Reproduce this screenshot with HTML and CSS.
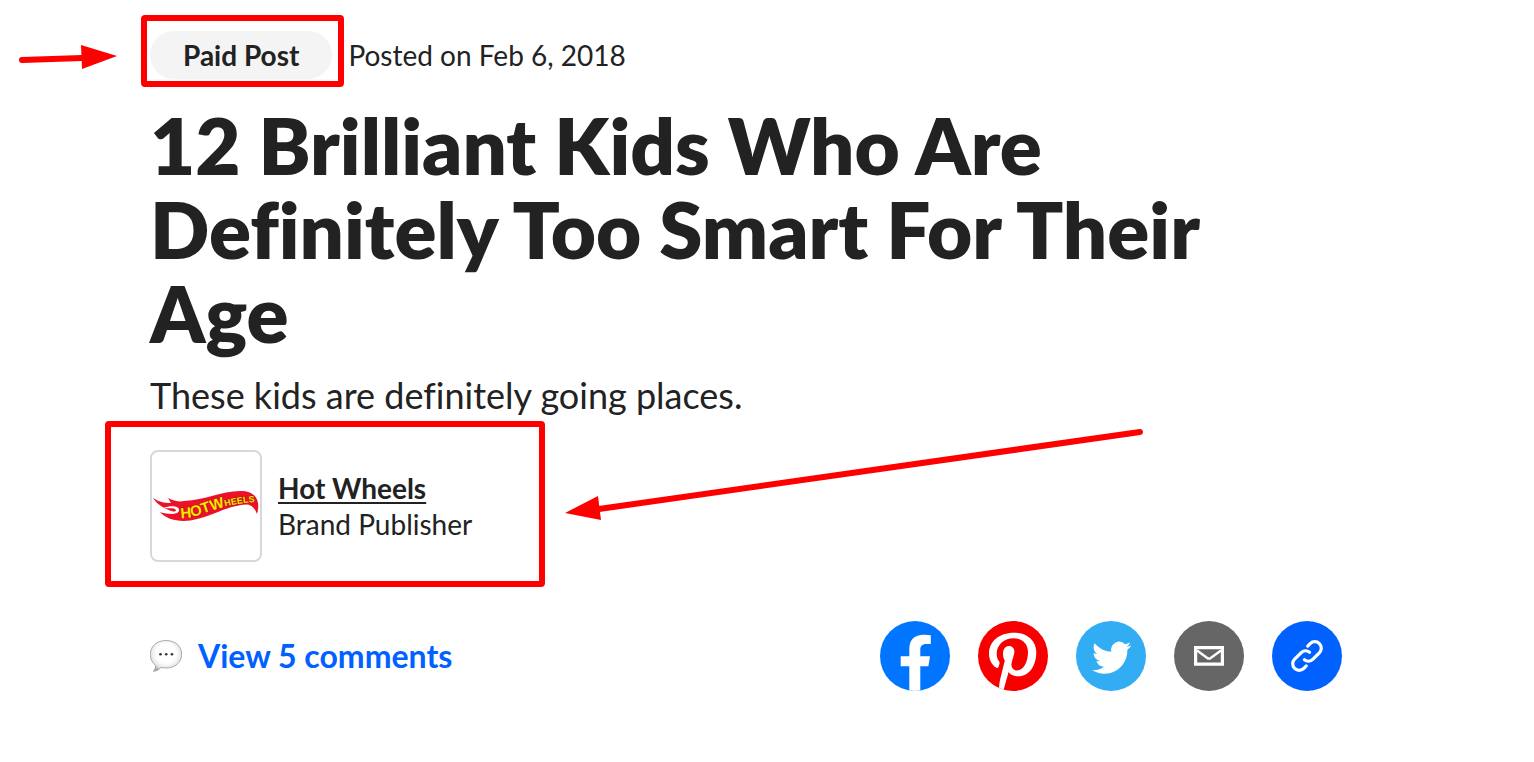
FILE: index.html
```html
<!DOCTYPE html>
<html lang="en">
<head>
<meta charset="utf-8">
<meta name="viewport" content="width=device-width, initial-scale=1">
<title>12 Brilliant Kids Who Are Definitely Too Smart For Their Age</title>
<link rel="stylesheet" href="styles.css">
</head>
<body>
<main class="post">
  <header>
    <div class="meta">
      <div class="marked">
        <span class="badge">Paid Post</span>
        <span class="frame frame-badge"></span>
        <svg class="arrow arrow-badge" viewBox="0 0 100 26" aria-hidden="true">
          <path d="M4 16 64 14" stroke="#f00" stroke-width="6" stroke-linecap="round"/>
          <path d="M63 1 99 12 64 25Z" fill="#f00"/>
        </svg>
      </div>
      <time class="date" datetime="2018-02-06">Posted on Feb 6, 2018</time>
    </div>
    <h1 class="title">12 Brilliant Kids Who Are Definitely Too Smart For Their Age</h1>
    <p class="subtitle">These kids are definitely going places.</p>
  </header>

  <div class="byline marked">
    <svg class="avatar" viewBox="0 0 108 108" role="img" aria-label="Hot Wheels logo">
      <defs>
        <path id="wave" d="M29 66C48 67 66 51 106 50"/>
      </defs>
      <path d="M1 46C7 50 12 51 19 51L16 46C22 49 27 50 32 49C55 48 70 38 91 39C103 40 109 48 105 62C102 54 98 51 89 53C69 56 54 68 32 69C21 69 12 65 8 60C14 62 19 62 24 60C17 59 6 54 1 46Z" fill="#ed1128"/>
      <path d="M11 56C20 53 28 54 27 59C25 63 17 62 14 61C20 61 24 60 24 58C21 55 17 57 11 56Z" fill="#fff"/>
      <text class="logo-text"><textPath href="#wave"><tspan font-size="15">HOTW</tspan><tspan font-size="9">HEELS</tspan></textPath></text>
    </svg>
    <div class="author">
      <a class="author-name" href="#author">Hot Wheels</a>
      <span>Brand Publisher</span>
    </div>
    <span class="frame frame-byline"></span>
    <svg class="arrow arrow-byline" viewBox="0 0 580 94" aria-hidden="true">
      <path d="M575 5 34 82" stroke="#f00" stroke-width="6" stroke-linecap="round"/>
      <path d="M0 86 33 69 36 93Z" fill="#f00"/>
    </svg>
  </div>

  <footer class="actions">
    <a class="comments" href="#comments">
      <svg class="bubble" viewBox="0 0 32 32" aria-hidden="true">
        <defs>
          <radialGradient id="shade" cx=".5" cy=".42" r=".58">
            <stop offset=".55" stop-color="#fff"/>
            <stop offset=".85" stop-color="#e4e4e4"/>
            <stop offset="1" stop-color="#aaa"/>
          </radialGradient>
        </defs>
        <path d="M16 .5C25 .5 31.7 6 31.7 14.2S25 28 16 28C14 28 12.500 27.800 11 27.400C9 29.500 6.500 31 3.500 31.300C5 29.500 5.800 27.500 5.600 25.300C2.200 22.800 .3 19 .3 14.500C.3 6 7 .5 16 .5Z" fill="url(#shade)" stroke="#999" stroke-width=".8"/>
        <g fill="#333"><circle cx="10.500" cy="14.300" r="1.300"/><circle cx="16.200" cy="14.300" r="1.300"/><circle cx="21.900" cy="14.300" r="1.300"/></g>
      </svg>
      <span>View 5 comments</span>
    </a>
    <nav class="share" aria-label="Share">
      <a class="share-link facebook" href="#facebook" aria-label="Facebook">
        <svg viewBox="0 0 70 70" fill="#fff"><path d="M29.300 70V45.300H20.700V35.300H29.300V28C29.300 18.500 35 13.700 43.300 13.700C47 13.700 50.800 14.300 50.800 14.300V23H46.200C42 23 40.300 25.400 40.300 28.500V35.300H50L48.400 45.300H40.300V70Z"/></svg>
      </a>
      <a class="share-link pinterest" href="#pinterest" aria-label="Pinterest">
        <svg viewBox="0 0 70 70" fill="#fff"><path d="M20.500 46C19.800 47.300 18.800 47.200 17.500 46.200C13.200 43 11 38 11 32.500C11 20.500 21 11.700 36 11.700C49.500 11.700 58.300 20 58.300 31C58.300 45 51 55.300 40.500 55.300C36 55.300 32 53.500 30.600 51L26 67.500L25 70L21.200 68C20.900 65 21.400 62 22 59L26.800 39.500C25.500 37.500 25 35 25 32.500C25 28 27.500 25 31 25C34.500 25 36.400 27.500 36.400 30.500C36.400 34 34.200 38.500 33.500 42.500C33 46.500 35.500 49.500 39 49.500C45.500 49.500 50 41 50 31C50 23 44.500 17.300 35.500 17.300C25.500 17.300 18.700 24.500 18.700 32.500C18.700 36 19.500 38.300 21 40.300C21.700 41.200 21.700 42 21.400 43Z"/></svg>
      </a>
      <a class="share-link twitter" href="#twitter" aria-label="Twitter">
        <svg viewBox="0 0 70 70" fill="#fff"><path transform="translate(16 17) scale(1.640)" d="M23.953 4.570a10 10 0 01-2.825.775 4.958 4.958 0 002.163-2.723c-.951.555-2.005.959-3.127 1.184a4.920 4.920 0 00-8.384 4.482C7.690 8.095 4.067 6.130 1.640 3.162a4.822 4.822 0 00-.666 2.475c0 1.710.870 3.213 2.188 4.096a4.904 4.904 0 01-2.228-.616v.060a4.923 4.923 0 003.946 4.827 4.996 4.996 0 01-2.212.085 4.936 4.936 0 004.604 3.417 9.867 9.867 0 01-6.102 2.105c-.390 0-.779-.023-1.170-.067a13.995 13.995 0 007.557 2.209c9.053 0 13.998-7.496 13.998-13.985 0-.210 0-.420-.015-.630A9.935 9.935 0 0024 4.590z"/></svg>
      </a>
      <a class="share-link email" href="#email" aria-label="Email">
        <svg viewBox="0 0 70 70" fill="none" stroke="#fff" stroke-width="3.200"><path d="M21.600 26.600H48.400V43.100H21.600Z"/><path d="M23 29.500 33.300 37Q35 38.200 36.700 37L47 29.500" stroke-width="2.400"/></svg>
      </a>
      <a class="share-link copy" href="#copy" aria-label="Copy link">
        <svg viewBox="0 0 70 70" fill="none" stroke="#fff" stroke-width="3.200" stroke-linecap="round"><g transform="translate(35 35) rotate(-45)"><path d="M7.500-6.500H11A6.500 6.500 0 0 1 11 6.500H2A6.500 6.500 0 0 1-4.400 .8"/><path d="M-7.500 6.500H-11A6.500 6.500 0 0 1-11-6.500H-2A6.500 6.500 0 0 1 4.400-.8"/></g></svg>
      </a>
    </nav>
  </footer>
</main>
</body>
</html>
```
FILE: styles.css
```css
* {
  box-sizing: border-box;
}

body {
  margin: 0;
  background: #fff;
  color: #222;
  font-family: Lato, "Liberation Sans", sans-serif;
  font-size: 28px;
  font-variant-ligatures: none;
  line-height: 36px;
}

.post {
  padding: 31px 192px 64px 150px;
}

.meta {
  display: flex;
  align-items: center;
  gap: 16px;
}

.marked {
  position: relative;
}

.badge {
  display: block;
  padding: 6px 33px;
  border-radius: 24px;
  background: #f4f4f4;
  font-weight: 700;
}

.title {
  margin: 24px 0 0;
  font-size: 78px;
  font-weight: 800;
  line-height: 84px;
}

.subtitle {
  margin: 16px 0 0;
  font-size: 36px;
  line-height: 48px;
}

.byline {
  display: flex;
  align-items: center;
  gap: 16px;
  margin-top: 31px;
}

.avatar {
  width: 112px;
  height: 112px;
  border: 2px solid #d8d8d8;
  border-radius: 8px;
}

.logo-text {
  fill: #ffe800;
  stroke: #a3150c;
  stroke-width: 1px;
  paint-order: stroke;
  font-family: "Liberation Sans Narrow", "Liberation Sans", sans-serif;
  font-weight: 700;
}

.author {
  display: flex;
  flex-direction: column;
  align-items: flex-start;
}

.author-name {
  color: inherit;
  font-weight: 700;
  text-decoration-thickness: 2px;
  text-underline-offset: 3px;
}

.frame {
  position: absolute;
  border: 6px solid #f00;
  border-radius: 4px;
}

.frame-badge {
  inset: -16px -12px -8px -9px;
}

.frame-byline {
  top: -29px;
  bottom: -25px;
  left: -45px;
  width: 440px;
}

.arrow {
  position: absolute;
}

.arrow-badge {
  top: 13px;
  left: -132px;
  width: 100px;
}

.arrow-byline {
  top: -23px;
  left: 415px;
  width: 580px;
}

.actions {
  display: flex;
  align-items: center;
  justify-content: space-between;
  margin-top: 59px;
}

.comments {
  display: flex;
  align-items: center;
  gap: 16px;
  color: #0061ff;
  font-size: 32px;
  font-weight: 700;
  text-decoration: none;
}

.bubble {
  width: 32px;
  height: 32px;
}

.share {
  display: flex;
  gap: 28px;
}

.share-link {
  width: 70px;
  height: 70px;
  overflow: hidden;
  border-radius: 50%;
}

.share-link svg {
  display: block;
}

.facebook {
  background: #0075ff;
}

.pinterest {
  background: #f80000;
}

.twitter {
  background: #32adf4;
}

.email {
  background: #666;
}

.copy {
  background: #0061ff;
}
```
